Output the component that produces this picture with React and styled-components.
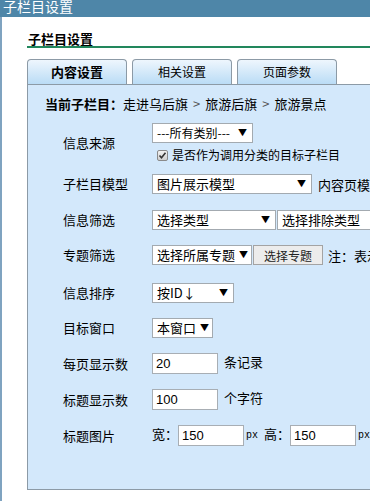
import React from 'react';
import styled, { createGlobalStyle } from 'styled-components';

const GlobalStyle = createGlobalStyle`
  body {
    margin: 0;
    background: #fff;
    font-family: "Noto Sans CJK SC", "Liberation Sans", sans-serif;
    font-size: 12px;
    color: #000;
  }
`;

const Page = styled.div`
  width: 370px;
  height: 501px;
  overflow: hidden;
  background: #fff;
`;

const TitleBar = styled.div`
  height: 17px;
  background: #4e86a8;
  color: #fff;
  font-size: 14px;
  line-height: 13px;
  padding-left: 3px;
  overflow: hidden;
`;

const Body = styled.div`
  height: 484px;
  border-left: 2px solid #7fa3c0;
  padding: 14px 0 0 25px;
  box-sizing: border-box;
`;

const SectionTitle = styled.div`
  font-size: 13px;
  font-weight: bold;
  line-height: 15px;
  padding-left: 1px;
  width: 400px;
  border-bottom: 2px solid #22875c;
`;

const Tabs = styled.div`
  display: flex;
  gap: 5px;
  margin-top: 11px;
`;

const Tab = styled.div`
  width: 100px;
  height: 25px;
  box-sizing: border-box;
  border: 1px solid #8c9aa6;
  border-bottom: none;
  border-radius: 4px 4px 0 0;
  background: linear-gradient(#eef6fd, #badcf6);
  text-align: center;
  line-height: 24px;
  font-size: ${p => (p.$active ? '13px' : '12px')};
  font-weight: ${p => (p.$active ? 'bold' : 'normal')};
`;

const Panel = styled.div`
  width: 420px;
  height: 406px;
  box-sizing: border-box;
  border: 1px solid #8c9aa6;
  background: #d3e8fb;
  padding: 10px 0 0 17px;
`;

const Crumb = styled.div`
  font-size: 13px;
  line-height: 17px;

  b {
    font-weight: bold;
  }

  span {
    color: #555;
    margin: 0 5px;
  }
`;

const Rows = styled.div`
  display: flex;
  flex-direction: column;
  padding-left: 18px;
  margin-top: 11px;
`;

const Row = styled.div`
  display: grid;
  grid-template-columns: 89px auto;
  align-items: center;
  margin-top: ${p => p.$mt ?? 15}px;
`;

const Label = styled.div`
  font-size: 13px;
  line-height: 16px;
`;

const Controls = styled.div`
  display: flex;
  align-items: center;
  gap: ${p => p.$gap ?? 0}px;
  white-space: nowrap;
`;

const Stack = styled.div`
  display: flex;
  flex-direction: column;
  align-items: flex-start;
  gap: 4px;
`;

const Select = styled.div`
  display: inline-flex;
  align-items: center;
  justify-content: space-between;
  width: ${p => p.$w}px;
  height: 20px;
  box-sizing: border-box;
  border: 1px solid #a3aab0;
  background: #fff;
  padding: 0 5px 0 4px;
  font-size: ${p => p.$fs ?? 13}px;
  line-height: 18px;
  white-space: nowrap;
  overflow: hidden;
  flex-shrink: 0;

  i {
    font-style: normal;
    font-size: 9px;
    margin-left: 4px;
  }
`;

const Button = styled.div`
  width: 70px;
  height: 20px;
  box-sizing: border-box;
  border: 1px solid #a3a3a3;
  background: #ececec;
  text-align: center;
  line-height: 19px;
  font-size: 12px;
  color: #222;
  flex-shrink: 0;
`;

const Input = styled.div`
  width: ${p => p.$w ?? 66}px;
  height: 21px;
  box-sizing: border-box;
  border: 1px solid #a8aeb4;
  background: #fff;
  padding-left: 3px;
  font-family: "Liberation Sans", sans-serif;
  font-size: 13px;
  line-height: 20px;
  flex-shrink: 0;
`;

const Note = styled.span`
  font-size: 13px;
  margin-left: ${p => p.$ml ?? 0}px;
  position: relative;
  top: ${p => (p.$up ? -2 : 0)}px;
`;

const Unit = styled.span`
  font-family: "Liberation Mono", monospace;
  font-size: 10px;
  margin: 0 ${p => p.$mr ?? 0}px 0 2px;
`;

const CheckLine = styled.label`
  display: flex;
  align-items: center;
  gap: 4px;
  padding-left: 5px;
  font-size: 12px;
  line-height: 16px;
  white-space: nowrap;
`;

const Box = styled.span`
  width: 11px;
  height: 11px;
  box-sizing: border-box;
  border: 1px solid #8a8a8a;
  border-radius: 2px;
  background: linear-gradient(#f2f2f2, #cfcfcf);
  display: inline-flex;
  align-items: center;
  justify-content: center;
`;

const Check = () => (
  <Box>
    <svg width="9" height="9" viewBox="0 0 9 9">
      <path d="M1.5 4.5 L3.5 6.8 L7.5 1.8" fill="none" stroke="#333" strokeWidth="1.6" />
    </svg>
  </Box>
);

export default function App() {
  return (
    <Page>
      <GlobalStyle />
      <TitleBar>子栏目设置</TitleBar>
      <Body>
        <SectionTitle>子栏目设置</SectionTitle>
        <Tabs>
          <Tab $active>内容设置</Tab>
          <Tab>相关设置</Tab>
          <Tab>页面参数</Tab>
        </Tabs>
        <Panel>
          <Crumb>
            <b>当前子栏目：</b>走进乌后旗<span>&gt;</span>旅游后旗<span>&gt;</span>旅游景点
          </Crumb>
          <Rows>
            <Row $mt={0}>
              <Label>信息来源</Label>
              <Stack>
                <Select $w={101} $fs={12}>---所有类别---<i>▼</i></Select>
                <CheckLine><Check />是否作为调用分类的目标子栏目</CheckLine>
              </Stack>
            </Row>
            <Row $mt={11}>
              <Label>子栏目模型</Label>
              <Controls>
                <Select $w={160}>图片展示模型<i>▼</i></Select>
                <Note $ml={6}>内容页模型</Note>
              </Controls>
            </Row>
            <Row $mt={16}>
              <Label>信息筛选</Label>
              <Controls $gap={1}>
                <Select $w={124}>选择类型<i>▼</i></Select>
                <Select $w={120}>选择排除类型<i>▼</i></Select>
              </Controls>
            </Row>
            <Row $mt={15}>
              <Label>专题筛选</Label>
              <Controls $gap={1}>
                <Select $w={100}>选择所属专题<i>▼</i></Select>
                <Button>选择专题</Button>
                <Note $ml={4}>注：表示</Note>
              </Controls>
            </Row>
            <Row $mt={18}>
              <Label>信息排序</Label>
              <Controls>
                <Select $w={82}>按ID↓<i>▼</i></Select>
              </Controls>
            </Row>
            <Row $mt={15}>
              <Label>目标窗口</Label>
              <Controls>
                <Select $w={61}>本窗口<i>▼</i></Select>
              </Controls>
            </Row>
            <Row $mt={15}>
              <Label>每页显示数</Label>
              <Controls>
                <Input>20</Input>
                <Note $ml={6} $up>条记录</Note>
              </Controls>
            </Row>
            <Row $mt={15}>
              <Label>标题显示数</Label>
              <Controls>
                <Input>100</Input>
                <Note $ml={6} $up>个字符</Note>
              </Controls>
            </Row>
            <Row $mt={15}>
              <Label>标题图片</Label>
              <Controls>
                <Note $up>宽：</Note>
                <Input>150</Input>
                <Unit $mr={6}>px</Unit>
                <Note $up>高：</Note>
                <Input>150</Input>
                <Unit>px</Unit>
              </Controls>
            </Row>
          </Rows>
        </Panel>
      </Body>
    </Page>
  );
}
